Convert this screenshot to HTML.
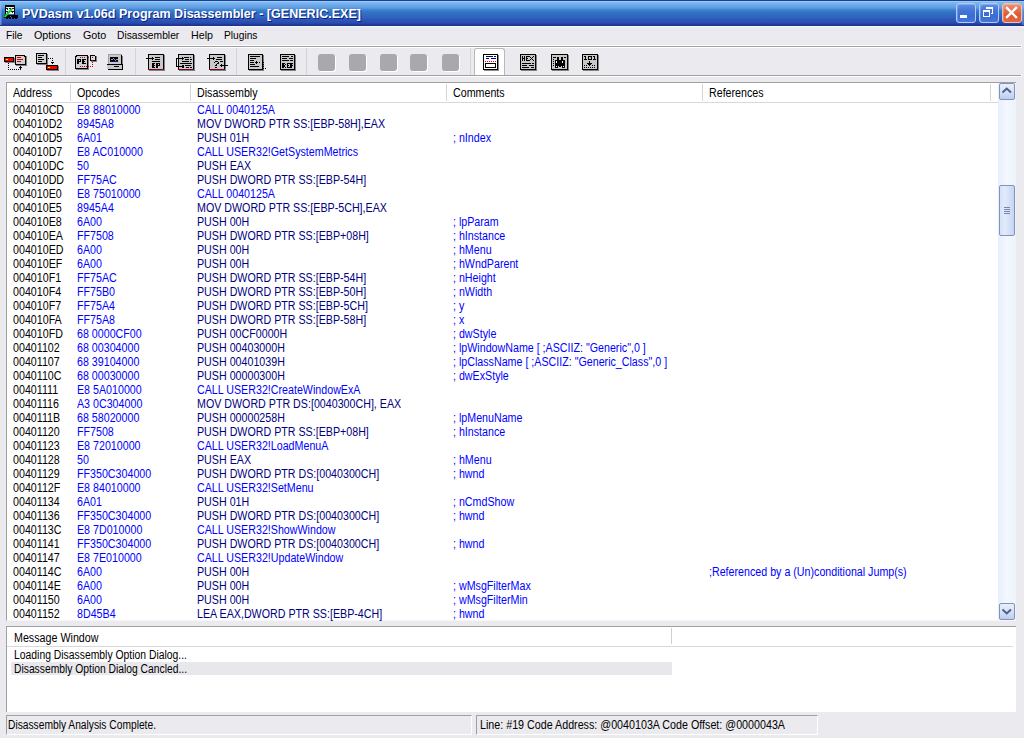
<!DOCTYPE html>
<html><head><meta charset="utf-8">
<style>
*{margin:0;padding:0;box-sizing:border-box}
html,body{width:1024px;height:738px;overflow:hidden;background:#EBEAEE;font-family:"Liberation Sans",sans-serif;font-size:11px;color:#000}
.a{position:absolute}
.t{white-space:pre;transform-origin:0 0;line-height:13px}
#title{left:0;top:0;width:1024px;height:26px;background:linear-gradient(#1E3C9C 0,#1E3C9C 1px,#9ACBF5 1px,#9ACBF5 2px,#7CBEEE 2px,#6EAAE8 5px,#5E9AE2 8px,#3A82D0 10px,#2E78C8 12px,#306EC0 14px,#3064BE 17px,#2E56B6 20px,#2B4AB0 23px,#2242A4 24px,#1A3590 25px,#1A3590 26px)}
.hsep{left:0;width:1024px;height:1px}
.row{left:8px;width:990px;height:14px;line-height:14px;white-space:pre;font-size:12px}
.row span{transform:scaleX(0.89);transform-origin:0 0}
.row span{position:absolute;top:0}
.c0{left:5px;color:#000}
.c1{left:69px;color:#0000FF}
.c2{left:189px;color:#000080}
.c2.call{color:#0000FF}
.c3{left:445px;color:#0000FF}
.c4{left:701px;color:#0000FF}
.wb{top:3px;width:20px;height:20px;border:1px solid #B0CCF4;border-radius:3px;background:linear-gradient(#5F90E4 0,#4274D8 40%,#3A6CD4 70%,#4676D8 100%);box-shadow:inset 1px 1px 1px rgba(255,255,255,0.25)}
.sbtn{width:16px;height:17px;border:1px solid #8392B6;border-radius:2px;background:linear-gradient(#E8F0FD 0,#D5E2F8 50%,#BCCDF0 100%)}
.stp{top:715px;height:20px;border-top:1px solid #A0A0A0;border-left:1px solid #A0A0A0;border-bottom:1px solid #fff;border-right:1px solid #fff}
.tsep{top:48px;width:1px;height:27px;background:#D4D3D8}
.gsq{top:54px;width:17px;height:17px;background:#A9A8AD;border-radius:3px;box-shadow:1px 1px 0 #fff}
.hd{top:84px;width:1px;height:17px;background:#D5D5D8}
</style></head><body>
<div id="title" class="a"></div>
<div class="a" style="left:0;top:1px;width:2px;height:24px;background:linear-gradient(90deg,rgba(150,190,250,0.7),rgba(150,190,250,0.2))"></div>
<div class="a" style="left:1022px;top:1px;width:2px;height:24px;background:linear-gradient(90deg,rgba(150,190,250,0.6),rgba(150,190,250,0.2))"></div>
<div class="a" style="left:0;top:26px;width:1024px;height:1px;background:#F6F6F8"></div>
<div class="a" style="left:0;top:30px;width:1024px;height:1px;background:#E6E4F2"></div>

<div class="a t" style="left:22px;top:5.5px;font-size:13.5px;color:#fff;transform:scaleX(0.9297);font-weight:bold;text-shadow:1px 1px 0 #0A1E80;line-height:16px">PVDasm v1.06d Program Disassembler - [GENERIC.EXE]</div>

<svg class="a" style="left:0;top:0" width="24" height="24" viewBox="0 0 24 24" shape-rendering="crispEdges">
<rect x="5" y="5" width="10" height="2" fill="#000"/><rect x="5" y="7" width="1" height="8" fill="#000"/><rect x="14" y="7" width="1" height="8" fill="#000"/>
<rect x="6" y="7" width="8" height="7" fill="#F4F4F0"/>
<path d="M6 8h2v1h-2zM9 8h2v1h-2zM12 8h2v1h-2zM7 9h1v1h-1zM10 9h1v1h-1zM6 11h2v1h-2zM9 11h1v1h-1zM11 11h3v1h-3zM7 12h1v1h-1zM12 12h1v1h-1z" fill="#202020"/>
<rect x="4" y="15" width="14" height="3" fill="#000"/>
<path d="M6 18h2v1h-2zM9 18h2v1h-2zM12 18h2v1h-2zM15 18h2v1h-2z" fill="#000"/>
<path d="M10 16h1v1h-1zM11 17h1v1h-1z" fill="#7060B0"/>
<path d="M4.5 17L12 9" stroke="#20D030" stroke-width="2" shape-rendering="auto"/>
</svg>
<div class="a wb" style="left:956px"></div>
<div class="a" style="left:960px;top:15px;width:7px;height:3px;background:#fff"></div>
<div class="a wb" style="left:979px"></div>
<svg class="a" style="left:979px;top:3px" width="20" height="20" viewBox="0 0 20 20" shape-rendering="crispEdges">
<path d="M7 4h7v2h-7zM13 6h1v5h-1zM12 10h1v1h-1z" fill="#fff"/>
<path d="M4 7h7v2h-7zM4 9h1v5h-1zM10 9h1v5h-1zM4 13h7v1h-7z" fill="#fff"/>
</svg>
<div class="a wb" style="left:1002px;border-color:#F4C0A8;background:linear-gradient(#E8957A 0,#E27050 35%,#DD5A30 60%,#E06848 100%)"></div>
<svg class="a" style="left:1002px;top:3px" width="20" height="20" viewBox="0 0 20 20">
<path d="M5 5L14 14M14 5L5 14" stroke="#fff" stroke-width="2.4" stroke-linecap="square"/>
</svg>

<div class="a t" style="left:5.5px;top:29px;font-size:11px;color:#000;transform:scaleX(0.9304);">File</div>
<div class="a t" style="left:33.5px;top:29px;font-size:11px;color:#000;transform:scaleX(0.9757);">Options</div>
<div class="a t" style="left:82.5px;top:29px;font-size:11px;color:#000;transform:scaleX(0.9766);">Goto</div>
<div class="a t" style="left:117.0px;top:29px;font-size:11px;color:#000;transform:scaleX(0.9349);">Disassembler</div>
<div class="a t" style="left:190.8px;top:29px;font-size:11px;color:#000;transform:scaleX(0.9724);">Help</div>
<div class="a t" style="left:224.3px;top:29px;font-size:11px;color:#000;transform:scaleX(0.9258);">Plugins</div>

<div class="a hsep" style="top:45px;background:#fff;width:1022px"></div>
<div class="a hsep" style="top:46px;background:#A0A0A0;width:1021px"></div>
<div class="a hsep" style="top:47px;background:#fff;width:1022px"></div>
<div class="a" style="left:1021px;top:45px;width:1px;height:3px;background:#fff"></div>
<div class="a" style="left:1021px;top:74px;width:1px;height:3px;background:#fff"></div>
<div class="a hsep" style="top:75px;background:#A0A0A0;width:1021px"></div>
<div class="a hsep" style="top:76px;background:#fff;width:1021px"></div>
<div class="a tsep" style="left:65px"></div>
<div class="a tsep" style="left:135px"></div>
<div class="a tsep" style="left:236px"></div>
<div class="a tsep" style="left:306px"></div>
<div class="a tsep" style="left:470px"></div>
<div class="a gsq" style="left:318px"></div>
<div class="a gsq" style="left:349px"></div>
<div class="a gsq" style="left:380px"></div>
<div class="a gsq" style="left:410px"></div>
<div class="a gsq" style="left:442px"></div>
<div class="a" style="left:474px;top:48px;width:31px;height:27px;background:#fff;border:1px solid #B8B8BC;border-bottom:none;border-radius:3px 3px 0 0"></div>

<svg class="a" style="left:0;top:48px" width="610" height="27" viewBox="0 48 610 27" shape-rendering="crispEdges"><rect x="5" y="58" width="10" height="5" fill="rgba(0,0,0,0.45)"/><rect x="4" y="57" width="10" height="5" fill="#000"/><rect x="5" y="58" width="8" height="3" fill="#FF0000"/><rect x="6" y="59" width="2" height="1" fill="#FFFF00"/><rect x="16" y="56" width="11" height="10" fill="rgba(0,0,0,0.45)"/><rect x="15" y="55" width="11" height="10" fill="#000"/><rect x="16" y="56" width="9" height="8" fill="#D0D0D0"/><rect x="25" y="55" width="1" height="1" fill="#EBEAEE"/><rect x="24" y="56" width="1" height="1" fill="#000"/><rect x="17" y="57" width="4" height="1" fill="#D00000"/><rect x="17" y="59" width="6" height="1" fill="#D00000"/><rect x="17" y="61" width="4" height="1" fill="#D00000"/><rect x="8" y="63" width="1" height="1" fill="#000"/><rect x="8" y="65" width="1" height="1" fill="#000"/><rect x="8" y="67" width="1" height="1" fill="#000"/><rect x="8" y="69" width="1" height="1" fill="#000"/><rect x="10" y="69" width="1" height="1" fill="#000"/><rect x="12" y="69" width="1" height="1" fill="#000"/><rect x="14" y="69" width="1" height="1" fill="#000"/><rect x="16" y="69" width="1" height="1" fill="#000"/><rect x="18" y="69" width="1" height="1" fill="#000"/><rect x="20" y="66" width="1" height="4" fill="#000"/><rect x="19" y="67" width="3" height="1" fill="#000"/><rect x="37" y="54" width="11" height="11" fill="rgba(0,0,0,0.45)"/><rect x="36" y="53" width="11" height="11" fill="#000"/><rect x="37" y="54" width="9" height="9" fill="#D0D0D0"/><rect x="38" y="55" width="6" height="1" fill="#000"/><rect x="38" y="57" width="4" height="1" fill="#000"/><rect x="38" y="59" width="6" height="1" fill="#000"/><rect x="38" y="61" width="4" height="1" fill="#000"/><rect x="48" y="58" width="1" height="1" fill="#000"/><rect x="50" y="58" width="1" height="1" fill="#000"/><rect x="52" y="58" width="1" height="1" fill="#000"/><rect x="52" y="60" width="1" height="1" fill="#000"/><rect x="51" y="62" width="3" height="1" fill="#000"/><rect x="52" y="63" width="1" height="1" fill="#000"/><rect x="47" y="66" width="12" height="5" fill="rgba(0,0,0,0.45)"/><rect x="46" y="65" width="12" height="5" fill="#000"/><rect x="47" y="66" width="10" height="3" fill="#FF0000"/><rect x="48" y="67" width="2" height="1" fill="#FFFF00"/><rect x="76" y="56" width="13" height="14" fill="rgba(0,0,0,0.45)"/><rect x="75" y="55" width="13" height="14" fill="#000"/><rect x="76" y="56" width="11" height="12" fill="#D0D0D0"/><rect x="75" y="55" width="1" height="1" fill="#EBEAEE"/><rect x="76" y="56" width="1" height="1" fill="#000"/><rect x="77" y="59" width="4" height="1" fill="#000"/><rect x="77" y="59" width="1" height="5" fill="#000"/><rect x="78" y="59" width="1" height="5" fill="#000"/><rect x="80" y="59" width="1" height="3" fill="#000"/><rect x="77" y="61" width="4" height="1" fill="#000"/><rect x="82" y="59" width="1" height="5" fill="#000"/><rect x="83" y="59" width="1" height="5" fill="#000"/><rect x="82" y="59" width="4" height="1" fill="#000"/><rect x="82" y="61" width="3" height="1" fill="#000"/><rect x="82" y="63" width="4" height="1" fill="#000"/><rect x="80" y="57" width="1" height="1" fill="#C00030"/><rect x="82" y="57" width="1" height="1" fill="#C00030"/><rect x="84" y="57" width="1" height="1" fill="#C00030"/><rect x="88" y="57" width="1" height="1" fill="#C00030"/><rect x="80" y="66" width="1" height="1" fill="#C00030"/><rect x="82" y="66" width="1" height="1" fill="#C00030"/><rect x="84" y="66" width="1" height="1" fill="#C00030"/><rect x="86" y="66" width="1" height="1" fill="#C00030"/><rect x="88" y="66" width="1" height="1" fill="#C00030"/><rect x="90" y="66" width="1" height="1" fill="#C00030"/><rect x="92" y="66" width="1" height="1" fill="#C00030"/><rect x="92" y="62" width="1" height="1" fill="#C00030"/><rect x="92" y="64" width="1" height="1" fill="#C00030"/><rect x="91" y="56" width="6" height="6" fill="rgba(0,0,0,0.45)"/><rect x="90" y="55" width="6" height="6" fill="#000"/><rect x="91" y="56" width="4" height="4" fill="#D8D8D8"/><rect x="95" y="55" width="1" height="1" fill="#EBEAEE"/><rect x="92" y="57" width="1" height="1" fill="#C00030"/><rect x="92" y="60" width="1" height="1" fill="#C00030"/><rect x="108" y="54" width="14" height="10" fill="#A0A0A0"/><rect x="109" y="55" width="12" height="9" fill="#C8C8C8"/><rect x="121" y="55" width="1" height="10" fill="#000"/><rect x="122" y="56" width="1" height="9" fill="rgba(0,0,0,0.45)"/><rect x="110" y="57" width="8" height="5" fill="#000"/><rect x="110" y="61" width="8" height="1" fill="#101090"/><rect x="111" y="59" width="1" height="1" fill="#90A890"/><rect x="112" y="59" width="1" height="1" fill="#90A890"/><rect x="113" y="58" width="1" height="1" fill="#90A890"/><rect x="114" y="59" width="1" height="1" fill="#90A890"/><rect x="115" y="60" width="1" height="1" fill="#90A890"/><rect x="116" y="59" width="1" height="1" fill="#90A890"/><rect x="117" y="59" width="1" height="1" fill="#90A890"/><rect x="107" y="64" width="16" height="1" fill="#000"/><rect x="107" y="65" width="15" height="4" fill="#C8C8C8"/><rect x="122" y="65" width="1" height="5" fill="#000"/><rect x="108" y="69" width="15" height="1" fill="#000"/><rect x="114" y="66" width="5" height="1" fill="#000"/><rect x="149" y="55" width="16" height="16" fill="rgba(0,0,0,0.45)"/><rect x="148" y="54" width="16" height="16" fill="#000"/><rect x="149" y="55" width="14" height="14" fill="#C9C9C9"/><rect x="148" y="69" width="16" height="1" fill="#800020"/><rect x="146" y="58" width="7" height="1" fill="#000"/><rect x="152" y="57" width="1" height="1" fill="#000"/><rect x="152" y="59" width="1" height="1" fill="#000"/><rect x="153" y="58" width="1" height="1" fill="#000"/><rect x="155" y="57" width="5" height="1" fill="#000"/><rect x="155" y="59" width="5" height="1" fill="#000"/><rect x="152" y="61" width="8" height="1" fill="#000"/><rect x="152" y="63" width="3" height="1" fill="#000"/><rect x="152" y="64" width="1" height="4" fill="#000"/><rect x="153" y="64" width="1" height="4" fill="#000"/><rect x="152" y="65" width="3" height="1" fill="#000"/><rect x="152" y="67" width="3" height="1" fill="#000"/><rect x="156" y="63" width="4" height="1" fill="#000"/><rect x="156" y="64" width="1" height="4" fill="#000"/><rect x="157" y="64" width="1" height="4" fill="#000"/><rect x="159" y="64" width="1" height="1" fill="#000"/><rect x="156" y="65" width="4" height="1" fill="#000"/><rect x="179" y="55" width="16" height="16" fill="rgba(0,0,0,0.45)"/><rect x="178" y="54" width="16" height="16" fill="#000"/><rect x="179" y="55" width="14" height="14" fill="#C9C9C9"/><rect x="178" y="69" width="16" height="1" fill="#800020"/><rect x="176" y="58" width="1" height="9" fill="#000"/><rect x="176" y="58" width="7" height="1" fill="#000"/><rect x="182" y="57" width="1" height="1" fill="#000"/><rect x="182" y="59" width="1" height="1" fill="#000"/><rect x="183" y="58" width="1" height="1" fill="#000"/><rect x="176" y="66" width="6" height="1" fill="#000"/><rect x="182" y="65" width="2" height="3" fill="#000"/><rect x="184" y="57" width="5" height="1" fill="#000"/><rect x="190" y="57" width="1" height="1" fill="#000"/><rect x="185" y="59" width="4" height="1" fill="#000"/><rect x="190" y="59" width="2" height="1" fill="#000"/><rect x="182" y="61" width="7" height="1" fill="#000"/><rect x="190" y="61" width="1" height="1" fill="#000"/><rect x="180" y="63" width="12" height="1" fill="#000"/><rect x="185" y="65" width="6" height="1" fill="#000"/><rect x="186" y="67" width="3" height="1" fill="#000"/><rect x="190" y="67" width="2" height="1" fill="#000"/><rect x="210" y="55" width="16" height="16" fill="rgba(0,0,0,0.45)"/><rect x="209" y="54" width="16" height="16" fill="#000"/><rect x="210" y="55" width="14" height="14" fill="#C9C9C9"/><rect x="209" y="69" width="16" height="1" fill="#800020"/><rect x="207" y="58" width="7" height="1" fill="#000"/><rect x="213" y="57" width="1" height="1" fill="#000"/><rect x="213" y="59" width="1" height="1" fill="#000"/><rect x="214" y="58" width="1" height="1" fill="#000"/><rect x="217" y="57" width="5" height="1" fill="#000"/><rect x="216" y="59" width="6" height="1" fill="#000"/><rect x="220" y="61" width="3" height="1" fill="#000"/><rect x="215" y="61" width="3" height="1" fill="#000"/><rect x="214" y="62" width="1" height="1" fill="#000"/><rect x="218" y="62" width="1" height="1" fill="#000"/><rect x="217" y="63" width="1" height="1" fill="#000"/><rect x="218" y="63" width="1" height="1" fill="#000"/><rect x="216" y="64" width="1" height="1" fill="#000"/><rect x="215" y="65" width="2" height="1" fill="#000"/><rect x="215" y="67" width="1" height="1" fill="#000"/><rect x="216" y="67" width="1" height="1" fill="#000"/><rect x="220" y="65" width="8" height="1" fill="#000"/><rect x="221" y="64" width="1" height="1" fill="#000"/><rect x="221" y="66" width="1" height="1" fill="#000"/><rect x="220" y="65" width="1" height="1" fill="#000"/><rect x="249" y="55" width="15" height="16" fill="rgba(0,0,0,0.45)"/><rect x="248" y="54" width="15" height="16" fill="#000"/><rect x="249" y="55" width="13" height="14" fill="#C9C9C9"/><rect x="250" y="56" width="10" height="1" fill="#000"/><rect x="250" y="58" width="6" height="1" fill="#000"/><rect x="250" y="60" width="4" height="1" fill="#000"/><rect x="250" y="62" width="4" height="1" fill="#000"/><rect x="250" y="64" width="5" height="1" fill="#000"/><rect x="250" y="66" width="9" height="1" fill="#000"/><rect x="255" y="62" width="3" height="1" fill="#000"/><rect x="256" y="61" width="1" height="1" fill="#000"/><rect x="256" y="63" width="1" height="1" fill="#000"/><rect x="259" y="62" width="1" height="1" fill="#000"/><rect x="263" y="62" width="1" height="1" fill="#000"/><rect x="263" y="64" width="1" height="1" fill="#000"/><rect x="263" y="66" width="1" height="1" fill="#000"/><rect x="263" y="68" width="1" height="1" fill="#000"/><rect x="265" y="68" width="1" height="1" fill="#000"/><rect x="281" y="55" width="15" height="16" fill="rgba(0,0,0,0.45)"/><rect x="280" y="54" width="15" height="16" fill="#000"/><rect x="281" y="55" width="13" height="14" fill="#C9C9C9"/><rect x="282" y="56" width="7" height="1" fill="#000"/><rect x="291" y="56" width="2" height="1" fill="#000"/><rect x="282" y="58" width="5" height="1" fill="#000"/><rect x="289" y="58" width="4" height="1" fill="#000"/><rect x="282" y="60" width="7" height="1" fill="#000"/><rect x="290" y="60" width="3" height="1" fill="#000"/><rect x="282" y="63" width="1" height="5" fill="#000"/><rect x="283" y="63" width="1" height="5" fill="#000"/><rect x="282" y="63" width="3" height="1" fill="#000"/><rect x="285" y="64" width="1" height="1" fill="#000"/><rect x="282" y="65" width="3" height="1" fill="#000"/><rect x="284" y="66" width="1" height="1" fill="#000"/><rect x="285" y="67" width="1" height="1" fill="#000"/><rect x="287" y="63" width="1" height="5" fill="#000"/><rect x="287" y="63" width="3" height="1" fill="#000"/><rect x="287" y="65" width="2" height="1" fill="#000"/><rect x="287" y="67" width="3" height="1" fill="#000"/><rect x="290" y="63" width="1" height="5" fill="#000"/><rect x="291" y="63" width="1" height="5" fill="#000"/><rect x="290" y="63" width="3" height="1" fill="#000"/><rect x="290" y="65" width="3" height="1" fill="#000"/><rect x="484" y="55" width="15" height="16" fill="rgba(0,0,0,0.45)"/><rect x="483" y="54" width="15" height="16" fill="#000"/><rect x="484" y="55" width="13" height="14" fill="#FFFFFF"/><rect x="486" y="56" width="7" height="1" fill="#000080"/><rect x="494" y="56" width="2" height="1" fill="#000080"/><rect x="486" y="58" width="3" height="1" fill="#000080"/><rect x="491" y="58" width="5" height="1" fill="#000080"/><rect x="485" y="61" width="1" height="1" fill="#FF0000"/><rect x="487" y="61" width="1" height="1" fill="#FF0000"/><rect x="489" y="61" width="1" height="1" fill="#FF0000"/><rect x="491" y="61" width="1" height="1" fill="#FF0000"/><rect x="493" y="61" width="1" height="1" fill="#FF0000"/><rect x="495" y="61" width="1" height="1" fill="#FF0000"/><rect x="485" y="63" width="11" height="5" fill="#000"/><rect x="486" y="64" width="9" height="3" fill="#fff"/><rect x="521" y="55" width="16" height="16" fill="rgba(0,0,0,0.45)"/><rect x="520" y="54" width="16" height="16" fill="#000"/><rect x="521" y="55" width="14" height="14" fill="#C9C9C9"/><rect x="522" y="56" width="1" height="5" fill="#000"/><rect x="524" y="56" width="1" height="5" fill="#000"/><rect x="522" y="58" width="3" height="1" fill="#000"/><rect x="526" y="56" width="1" height="5" fill="#000"/><rect x="526" y="56" width="3" height="1" fill="#000"/><rect x="526" y="58" width="2" height="1" fill="#000"/><rect x="526" y="60" width="3" height="1" fill="#000"/><rect x="529" y="56" width="1" height="1" fill="#000"/><rect x="533" y="56" width="1" height="1" fill="#000"/><rect x="530" y="57" width="1" height="1" fill="#000"/><rect x="532" y="57" width="1" height="1" fill="#000"/><rect x="531" y="58" width="1" height="1" fill="#000"/><rect x="530" y="59" width="1" height="1" fill="#000"/><rect x="532" y="59" width="1" height="1" fill="#000"/><rect x="529" y="60" width="1" height="1" fill="#000"/><rect x="533" y="60" width="1" height="1" fill="#000"/><rect x="522" y="63" width="9" height="1" fill="#000"/><rect x="532" y="63" width="2" height="1" fill="#000"/><rect x="522" y="65" width="5" height="1" fill="#000"/><rect x="529" y="65" width="5" height="1" fill="#000"/><rect x="522" y="67" width="7" height="1" fill="#000"/><rect x="531" y="67" width="3" height="1" fill="#000"/><rect x="552" y="55" width="17" height="16" fill="rgba(0,0,0,0.45)"/><rect x="551" y="54" width="17" height="16" fill="#000"/><rect x="552" y="55" width="15" height="14" fill="#C9C9C9"/><rect x="553" y="57" width="3" height="1" fill="#000"/><rect x="564" y="57" width="2" height="1" fill="#000"/><rect x="553" y="59" width="1" height="1" fill="#000"/><rect x="553" y="61" width="1" height="1" fill="#000"/><rect x="553" y="63" width="1" height="1" fill="#000"/><rect x="553" y="65" width="1" height="1" fill="#000"/><rect x="557" y="57" width="2" height="3" fill="#000"/><rect x="561" y="57" width="2" height="3" fill="#000"/><rect x="555" y="60" width="10" height="6" fill="#000"/><rect x="556" y="61" width="1" height="1" fill="#fff"/><rect x="556" y="62" width="1" height="1" fill="#fff"/><rect x="562" y="61" width="1" height="1" fill="#fff"/><rect x="562" y="62" width="1" height="1" fill="#fff"/><rect x="555" y="66" width="3" height="2" fill="#000"/><rect x="562" y="66" width="3" height="2" fill="#000"/><rect x="559" y="66" width="2" height="1" fill="#000"/><rect x="556" y="66" width="1" height="1" fill="#fff"/><rect x="563" y="66" width="1" height="1" fill="#fff"/><rect x="583" y="55" width="16" height="16" fill="rgba(0,0,0,0.45)"/><rect x="582" y="54" width="16" height="16" fill="#000"/><rect x="583" y="55" width="14" height="14" fill="#C9C9C9"/><rect x="584" y="56" width="2" height="1" fill="#000"/><rect x="585" y="57" width="1" height="2" fill="#000"/><rect x="584" y="59" width="3" height="1" fill="#000"/><rect x="588" y="56" width="4" height="1" fill="#000"/><rect x="588" y="57" width="1" height="2" fill="#000"/><rect x="591" y="57" width="1" height="2" fill="#000"/><rect x="588" y="59" width="4" height="1" fill="#000"/><rect x="593" y="56" width="2" height="1" fill="#000"/><rect x="594" y="57" width="1" height="2" fill="#000"/><rect x="593" y="59" width="3" height="1" fill="#000"/><rect x="589" y="61" width="1" height="3" fill="#000"/><rect x="587" y="63" width="5" height="1" fill="#000"/><rect x="588" y="64" width="3" height="1" fill="#000"/><rect x="589" y="65" width="1" height="1" fill="#000"/><rect x="584" y="65" width="1" height="1" fill="#000"/><rect x="586" y="65" width="1" height="1" fill="#000"/><rect x="592" y="65" width="1" height="1" fill="#000"/><rect x="594" y="65" width="1" height="1" fill="#000"/><rect x="584" y="67" width="1" height="1" fill="#000"/><rect x="586" y="67" width="1" height="1" fill="#000"/><rect x="588" y="67" width="1" height="1" fill="#000"/><rect x="590" y="67" width="1" height="1" fill="#000"/><rect x="592" y="67" width="1" height="1" fill="#000"/><rect x="594" y="67" width="1" height="1" fill="#000"/></svg>

<div class="a" style="left:6px;top:82px;width:1010px;height:539px;background:#fff;border-top:1px solid #A0A0A0;border-left:1px solid #A0A0A0;border-bottom:1px solid #F6F6F8"></div>
<div class="a" style="left:8px;top:102px;width:990px;height:1px;background:#D8D8D8"></div>
<div class="a hd" style="left:70px"></div>
<div class="a hd" style="left:190px"></div>
<div class="a hd" style="left:446px"></div>
<div class="a hd" style="left:702px"></div>
<div class="a hd" style="left:990px"></div>

<div class="a t" style="left:13px;top:87px;font-size:12px;transform:scaleX(0.89)">Address</div>
<div class="a t" style="left:77px;top:87px;font-size:12px;transform:scaleX(0.89)">Opcodes</div>
<div class="a t" style="left:197px;top:87px;font-size:12px;transform:scaleX(0.89)">Disassembly</div>
<div class="a t" style="left:453px;top:87px;font-size:12px;transform:scaleX(0.89)">Comments</div>
<div class="a t" style="left:709px;top:87px;font-size:12px;transform:scaleX(0.89)">References</div>
<div class="a row" style="top:103px"><span class="c0">004010CD</span><span class="c1">E8 88010000</span><span class="c2 call">CALL 0040125A</span></div>
<div class="a row" style="top:117px"><span class="c0">004010D2</span><span class="c1">8945A8</span><span class="c2">MOV DWORD PTR SS:[EBP-58H],EAX</span></div>
<div class="a row" style="top:131px"><span class="c0">004010D5</span><span class="c1">6A01</span><span class="c2">PUSH 01H</span><span class="c3">; nIndex</span></div>
<div class="a row" style="top:145px"><span class="c0">004010D7</span><span class="c1">E8 AC010000</span><span class="c2 call">CALL USER32!GetSystemMetrics</span></div>
<div class="a row" style="top:159px"><span class="c0">004010DC</span><span class="c1">50</span><span class="c2">PUSH EAX</span></div>
<div class="a row" style="top:173px"><span class="c0">004010DD</span><span class="c1">FF75AC</span><span class="c2">PUSH DWORD PTR SS:[EBP-54H]</span></div>
<div class="a row" style="top:187px"><span class="c0">004010E0</span><span class="c1">E8 75010000</span><span class="c2 call">CALL 0040125A</span></div>
<div class="a row" style="top:201px"><span class="c0">004010E5</span><span class="c1">8945A4</span><span class="c2">MOV DWORD PTR SS:[EBP-5CH],EAX</span></div>
<div class="a row" style="top:215px"><span class="c0">004010E8</span><span class="c1">6A00</span><span class="c2">PUSH 00H</span><span class="c3">; lpParam</span></div>
<div class="a row" style="top:229px"><span class="c0">004010EA</span><span class="c1">FF7508</span><span class="c2">PUSH DWORD PTR SS:[EBP+08H]</span><span class="c3">; hInstance</span></div>
<div class="a row" style="top:243px"><span class="c0">004010ED</span><span class="c1">6A00</span><span class="c2">PUSH 00H</span><span class="c3">; hMenu</span></div>
<div class="a row" style="top:257px"><span class="c0">004010EF</span><span class="c1">6A00</span><span class="c2">PUSH 00H</span><span class="c3">; hWndParent</span></div>
<div class="a row" style="top:271px"><span class="c0">004010F1</span><span class="c1">FF75AC</span><span class="c2">PUSH DWORD PTR SS:[EBP-54H]</span><span class="c3">; nHeight</span></div>
<div class="a row" style="top:285px"><span class="c0">004010F4</span><span class="c1">FF75B0</span><span class="c2">PUSH DWORD PTR SS:[EBP-50H]</span><span class="c3">; nWidth</span></div>
<div class="a row" style="top:299px"><span class="c0">004010F7</span><span class="c1">FF75A4</span><span class="c2">PUSH DWORD PTR SS:[EBP-5CH]</span><span class="c3">; y</span></div>
<div class="a row" style="top:313px"><span class="c0">004010FA</span><span class="c1">FF75A8</span><span class="c2">PUSH DWORD PTR SS:[EBP-58H]</span><span class="c3">; x</span></div>
<div class="a row" style="top:327px"><span class="c0">004010FD</span><span class="c1">68 0000CF00</span><span class="c2">PUSH 00CF0000H</span><span class="c3">; dwStyle</span></div>
<div class="a row" style="top:341px"><span class="c0">00401102</span><span class="c1">68 00304000</span><span class="c2">PUSH 00403000H</span><span class="c3">; lpWindowName [ ;ASCIIZ: &quot;Generic&quot;,0 ]</span></div>
<div class="a row" style="top:355px"><span class="c0">00401107</span><span class="c1">68 39104000</span><span class="c2">PUSH 00401039H</span><span class="c3">; lpClassName [ ;ASCIIZ: &quot;Generic_Class&quot;,0 ]</span></div>
<div class="a row" style="top:369px"><span class="c0">0040110C</span><span class="c1">68 00030000</span><span class="c2">PUSH 00000300H</span><span class="c3">; dwExStyle</span></div>
<div class="a row" style="top:383px"><span class="c0">00401111</span><span class="c1">E8 5A010000</span><span class="c2 call">CALL USER32!CreateWindowExA</span></div>
<div class="a row" style="top:397px"><span class="c0">00401116</span><span class="c1">A3 0C304000</span><span class="c2">MOV DWORD PTR DS:[0040300CH], EAX</span></div>
<div class="a row" style="top:411px"><span class="c0">0040111B</span><span class="c1">68 58020000</span><span class="c2">PUSH 00000258H</span><span class="c3">; lpMenuName</span></div>
<div class="a row" style="top:425px"><span class="c0">00401120</span><span class="c1">FF7508</span><span class="c2">PUSH DWORD PTR SS:[EBP+08H]</span><span class="c3">; hInstance</span></div>
<div class="a row" style="top:439px"><span class="c0">00401123</span><span class="c1">E8 72010000</span><span class="c2 call">CALL USER32!LoadMenuA</span></div>
<div class="a row" style="top:453px"><span class="c0">00401128</span><span class="c1">50</span><span class="c2">PUSH EAX</span><span class="c3">; hMenu</span></div>
<div class="a row" style="top:467px"><span class="c0">00401129</span><span class="c1">FF350C304000</span><span class="c2">PUSH DWORD PTR DS:[0040300CH]</span><span class="c3">; hwnd</span></div>
<div class="a row" style="top:481px"><span class="c0">0040112F</span><span class="c1">E8 84010000</span><span class="c2 call">CALL USER32!SetMenu</span></div>
<div class="a row" style="top:495px"><span class="c0">00401134</span><span class="c1">6A01</span><span class="c2">PUSH 01H</span><span class="c3">; nCmdShow</span></div>
<div class="a row" style="top:509px"><span class="c0">00401136</span><span class="c1">FF350C304000</span><span class="c2">PUSH DWORD PTR DS:[0040300CH]</span><span class="c3">; hwnd</span></div>
<div class="a row" style="top:523px"><span class="c0">0040113C</span><span class="c1">E8 7D010000</span><span class="c2 call">CALL USER32!ShowWindow</span></div>
<div class="a row" style="top:537px"><span class="c0">00401141</span><span class="c1">FF350C304000</span><span class="c2">PUSH DWORD PTR DS:[0040300CH]</span><span class="c3">; hwnd</span></div>
<div class="a row" style="top:551px"><span class="c0">00401147</span><span class="c1">E8 7E010000</span><span class="c2 call">CALL USER32!UpdateWindow</span></div>
<div class="a row" style="top:565px"><span class="c0">0040114C</span><span class="c1">6A00</span><span class="c2">PUSH 00H</span><span class="c4">;Referenced by a (Un)conditional Jump(s)</span></div>
<div class="a row" style="top:579px"><span class="c0">0040114E</span><span class="c1">6A00</span><span class="c2">PUSH 00H</span><span class="c3">; wMsgFilterMax</span></div>
<div class="a row" style="top:593px"><span class="c0">00401150</span><span class="c1">6A00</span><span class="c2">PUSH 00H</span><span class="c3">; wMsgFilterMin</span></div>
<div class="a row" style="top:607px"><span class="c0">00401152</span><span class="c1">8D45B4</span><span class="c2">LEA EAX,DWORD PTR SS:[EBP-4CH]</span><span class="c3">; hwnd</span></div>

<div class="a" style="left:998px;top:83px;width:18px;height:537px;background:linear-gradient(90deg,#E6EFFC 0,#F4F8FE 50%,#EDF3FC 100%)"></div>
<div class="a sbtn" style="left:999px;top:83px"></div>
<svg class="a" style="left:999px;top:83px" width="16" height="17"><path d="M3.5 9.5L7.75 5.5L12 9.5" fill="none" stroke="#4D6185" stroke-width="2"/></svg>
<div class="a sbtn" style="left:999px;top:185px;height:51px;background:linear-gradient(90deg,#D6E2F8 0,#E2EBFB 35%,#C6D5F3 100%)"></div>
<svg class="a" style="left:999px;top:185px" width="16" height="51" shape-rendering="crispEdges"><path d="M5 22h6v1h-6zM5 24h6v1h-6zM5 26h6v1h-6zM5 28h6v1h-6z" fill="#7786B0"/></svg>
<div class="a sbtn" style="left:999px;top:603px"></div>
<svg class="a" style="left:999px;top:603px" width="16" height="17"><path d="M3.5 6.5L7.75 10.5L12 6.5" fill="none" stroke="#4D6185" stroke-width="2"/></svg>


<div class="a" style="left:6px;top:626px;width:1010px;height:86px;background:#fff;border-top:1px solid #A0A0A0;border-left:1px solid #A0A0A0"></div>
<div class="a" style="left:7px;top:646px;width:1006px;height:1px;background:#D8D8D8"></div>
<div class="a" style="left:671px;top:628px;width:1px;height:16px;background:#D0D0D0"></div>
<div class="a" style="left:11px;top:662px;width:661px;height:13px;background:#E8E7EB"></div>

<div class="a t" style="left:13.5px;top:632px;font-size:12px;color:#000;transform:scaleX(0.8921);">Message Window</div>
<div class="a t" style="left:13.5px;top:649px;font-size:12px;color:#000;transform:scaleX(0.8645);">Loading Disassembly Option Dialog...</div>
<div class="a t" style="left:13.5px;top:663px;font-size:12px;color:#000;transform:scaleX(0.8589);">Disassembly Option Dialog Cancled...</div>

<div class="a stp" style="left:6px;width:466px"></div>
<div class="a stp" style="left:476px;width:342px"></div>

<div class="a t" style="left:8px;top:719px;font-size:12px;color:#000;transform:scaleX(0.8535);">Disassembly Analysis Complete.</div>
<div class="a t" style="left:480px;top:719px;font-size:12px;color:#000;transform:scaleX(0.8925);">Line: #19 Code Address: @0040103A Code Offset: @0000043A</div>
</body></html>
